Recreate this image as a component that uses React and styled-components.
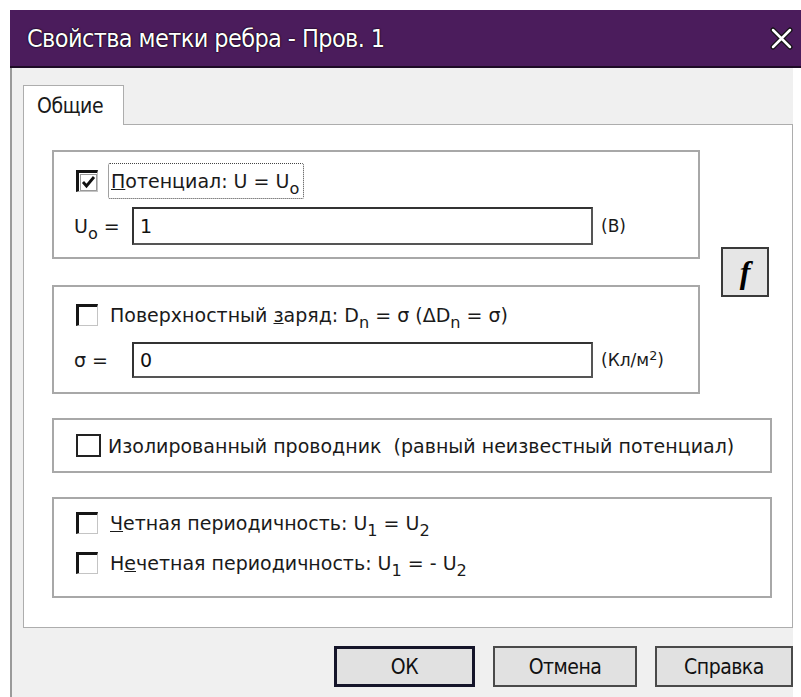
import styled, { createGlobalStyle } from "styled-components";

const GlobalStyle = createGlobalStyle`
  body {
    margin: 0;
    background: #fff;
    font-family: "DejaVu Sans", "Liberation Sans", sans-serif;
    color: #1a1a1a;
  }
  * { box-sizing: border-box; }
`;

const narrow = `"Liberation Sans Narrow", "DejaVu Sans Condensed", "Liberation Sans", sans-serif`;

const Window = styled.div`
  margin: 10px 0 0 10px;
  width: 791px;
  height: 687px;
  display: flex;
  flex-direction: column;
  overflow: hidden;
`;

const TitleBar = styled.div`
  height: 58px;
  flex: none;
  background: #4b1c5c;
  border-bottom: 2px solid #1d0b25;
  display: flex;
  align-items: center;
  justify-content: space-between;
  padding: 0 8px 0 17px;
  color: #fff;
  font-family: ${narrow};
  font-size: 25px;
  letter-spacing: -0.6px;
  text-shadow: 0 0 2px #000, 0 0 1px #000;
`;

const CloseIcon = () => (
  <svg width="23" height="23" viewBox="0 0 23 23">
    <path d="M3 3 L20 20 M20 3 L3 20" stroke="#111" strokeWidth="5" strokeLinecap="round" />
    <path d="M3 3 L20 20 M20 3 L3 20" stroke="#fff" strokeWidth="2.5" strokeLinecap="round" />
  </svg>
);

const Body = styled.div`
  flex: 1;
  background: #f0f0f0;
  border-left: 2px solid #9a9a9a;
  padding: 17px 0 0 11px;
  display: flex;
  flex-direction: column;
  width: 770px;
  box-sizing: content-box;
`;

const Tab = styled.div`
  width: 101px;
  height: 40px;
  background: #fff;
  border: 1px solid #adadad;
  border-bottom: none;
  margin-bottom: -1px;
  position: relative;
  z-index: 1;
  display: flex;
  align-items: center;
  padding-left: 13px;
  font-family: ${narrow};
  font-size: 21px;
  letter-spacing: -0.4px;
`;

const Panel = styled.div`
  width: 770px;
  height: 504px;
  background: #fff;
  border: 1px solid #adadad;
  padding: 25px 21px 0 28px;
  display: flex;
  flex-direction: column;
  gap: 24px;
`;

const TopRow = styled.div`
  display: flex;
  align-items: center;
  gap: 21px;
`;

const Column = styled.div`
  display: flex;
  flex-direction: column;
  gap: 26px;
  width: 648px;
`;

const Group = styled.div`
  border: 2px solid #a8a8a8;
  width: ${p => p.$width || 720}px;
  height: ${p => p.$height}px;
  padding: ${p => p.$pad};
  display: flex;
  flex-direction: column;
  justify-content: ${p => p.$center ? "center" : "flex-start"};
  gap: ${p => p.$gap || 0}px;
  font-size: 19px;
`;

const Row = styled.div`
  display: flex;
  align-items: center;
  height: ${p => p.$h || 30}px;
`;

const Box = styled.span`
  flex: none;
  width: ${p => p.$flat ? 25 : 22}px;
  height: ${p => p.$flat ? 23 : 22}px;
  margin-left: 2px;
  background: #fff;
  display: flex;
  align-items: center;
  justify-content: center;
  ${p => p.$flat
    ? `border: 2px solid #222;`
    : `border-top: 3px solid #151515;
       border-left: 3px solid #151515;
       border-right: 1px solid #c4c4c4;
       border-bottom: 1px solid #c4c4c4;`}
`;

const Check = () => (
  <svg width="17" height="17" viewBox="0 0 17 17">
    <rect x="0.5" y="0.5" width="16" height="16" fill="none" stroke="#9a9a9a" strokeWidth="1" />
    <path d="M3 8 L6.5 12 L14 3" fill="none" stroke="#111" strokeWidth="2.8" />
  </svg>
);

const Label = styled.span`
  margin-left: ${p => p.$gap || 12}px;
  white-space: nowrap;
`;

const FocusLabel = styled.span`
  margin-left: 10px;
  height: 36px;
  display: flex;
  align-items: center;
  padding: 0 4px 0 2px;
  border: 1px dotted #444;
  border-radius: 2px;
  white-space: nowrap;
`;

const Sub = styled.sub`
  font-size: 0.85em;
  vertical-align: -0.35em;
  line-height: 0;
`;

const Sup = styled.sup`
  font-size: 0.75em;
  vertical-align: 0.45em;
  line-height: 0;
`;

const FieldName = styled.span`
  width: 58px;
  flex: none;
  white-space: nowrap;
`;

const Input = styled.input`
  width: 461px;
  height: ${p => p.$h}px;
  border: 2px solid #333;
  border-right-color: #555;
  border-bottom-color: #555;
  background: #fff;
  font-family: "DejaVu Sans", sans-serif;
  font-size: 19px;
  color: #111;
  padding: 0 6px;
  outline: none;
`;

const Unit = styled.span`
  margin-left: 8px;
  font-size: 17px;
  white-space: nowrap;
`;

const FuncButton = styled.button`
  width: 48px;
  height: 50px;
  flex: none;
  background: #e6e6e6;
  border: 2px solid #3a3a3a;
  font-family: "Liberation Serif", serif;
  font-weight: bold;
  font-style: italic;
  font-size: 32px;
  color: #000;
  padding: 0;
`;

const ButtonRow = styled.div`
  display: flex;
  justify-content: flex-end;
  margin-top: 18px;
  gap: 18px;
`;

const Button = styled.button`
  width: ${p => p.$w}px;
  height: 41px;
  background: #e1e1e1;
  border: ${p => p.$default ? "3px solid #15152a" : "2px solid #4a4a4a"};
  font-family: ${narrow};
  font-size: 21px;
  letter-spacing: -0.5px;
  color: #111;
  padding: 0;
`;

export default function App() {
  return (
    <>
      <GlobalStyle />
      <Window>
        <TitleBar>
          <span>Свойства метки ребра - Пров. 1</span>
          <CloseIcon />
        </TitleBar>
        <Body>
          <Tab>Общие</Tab>
          <Panel>
            <TopRow>
              <Column>
                <Group $width={648} $height={109} $pad="11px 0 12px 20px" $gap={8}>
                  <Row $h={36}>
                    <Box><Check /></Box>
                    <FocusLabel>
                      <span><u>П</u>отенциал: U = U<Sub>o</Sub></span>
                    </FocusLabel>
                  </Row>
                  <Row $h={38}>
                    <FieldName>U<Sub>o</Sub> =</FieldName>
                    <Input $h={38} defaultValue="1" />
                    <Unit>(В)</Unit>
                  </Row>
                </Group>
                <Group $width={648} $height={109} $pad="10px 0 14px 20px" $gap={9}>
                  <Row $h={36}>
                    <Box />
                    <Label>
                      Поверхностный <u>з</u>аряд: D<Sub>n</Sub> = σ (ΔD<Sub>n</Sub> = σ)
                    </Label>
                  </Row>
                  <Row $h={36}>
                    <FieldName>σ =</FieldName>
                    <Input $h={36} defaultValue="0" />
                    <Unit>(Кл/м<Sup>2</Sup>)</Unit>
                  </Row>
                </Group>
              </Column>
              <FuncButton>f</FuncButton>
            </TopRow>
            <Group $height={55} $pad="0 0 0 20px" $center>
              <Row>
                <Box $flat />
                <Label $gap={7}>Изолированный проводник&nbsp; (равный неизвестный потенциал)</Label>
              </Row>
            </Group>
            <Group $height={101} $pad="9px 0 0 20px" $gap={10}>
              <Row>
                <Box />
                <Label><u>Ч</u>етная периодичность: U<Sub>1</Sub> = U<Sub>2</Sub></Label>
              </Row>
              <Row>
                <Box />
                <Label>Н<u>е</u>четная периодичность: U<Sub>1</Sub> = - U<Sub>2</Sub></Label>
              </Row>
            </Group>
          </Panel>
          <ButtonRow>
            <Button $w={141} $default>ОК</Button>
            <Button $w={144}>Отмена</Button>
            <Button $w={138}>Справка</Button>
          </ButtonRow>
        </Body>
      </Window>
    </>
  );
}
